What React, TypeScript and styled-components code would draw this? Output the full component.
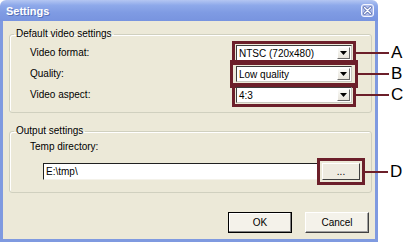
import React from "react";
import styled, { createGlobalStyle } from "styled-components";

const GlobalStyle = createGlobalStyle`
  html, body {
    margin: 0;
    padding: 0;
    background: #ffffff;
  }
  body {
    font-family: "Liberation Sans", Arial, sans-serif;
    font-size: 10px;
    color: #000;
  }
`;

const MAROON = "#6c1f2a";

function App() {
  return (
    <>
      <GlobalStyle />
      <Page>
        <Dialog>
          <TitleBar>
            <Title>Settings</Title>
            <CloseButton>
              <svg width="13" height="13" viewBox="0 0 13 13">
                <rect x="0.5" y="0.5" width="12" height="12" rx="2.5" fill="#aebbe8" stroke="#f4f6ff" />
                <path d="M3.5 3.5 L9.5 9.5 M9.5 3.5 L3.5 9.5" stroke="#5b6fb0" strokeWidth="3" strokeLinecap="round" />
                <path d="M3.5 3.5 L9.5 9.5 M9.5 3.5 L3.5 9.5" stroke="#ffffff" strokeWidth="1.4" strokeLinecap="round" />
              </svg>
            </CloseButton>
          </TitleBar>

          <Body>
            <GroupBox>
              <Legend>Default video settings</Legend>
              <VideoRows>
                <FieldRow>
                  <FieldLabel>Video format:</FieldLabel>
                  <Callout $offset={1}>
                    <Combo value="NTSC (720x480)" />
                    <Tag $offset={1} $reach={33}>A</Tag>
                  </Callout>
                </FieldRow>
                <FieldRow>
                  <FieldLabel>Quality:</FieldLabel>
                  <Callout $offset={3}>
                    <Combo value="Low quality" />
                    <Tag $offset={3} $reach={31}>B</Tag>
                  </Callout>
                </FieldRow>
                <FieldRow>
                  <FieldLabel>Video aspect:</FieldLabel>
                  <Callout $offset={1}>
                    <Combo value="4:3" />
                    <Tag $offset={1} $reach={33}>C</Tag>
                  </Callout>
                </FieldRow>
              </VideoRows>
            </GroupBox>

            <OutputGroup>
              <Legend>Output settings</Legend>
              <OutputContent>
                <FieldLabel>Temp directory:</FieldLabel>
                <PathRow>
                  <TextBox>E:\tmp\</TextBox>
                  <Callout $offset={2}>
                    <BrowseButton>...</BrowseButton>
                    <Tag $offset={2} $reach={23}>D</Tag>
                  </Callout>
                </PathRow>
              </OutputContent>
            </OutputGroup>

            <ButtonRow>
              <PushButton $default>OK</PushButton>
              <PushButton>Cancel</PushButton>
            </ButtonRow>
          </Body>
        </Dialog>
      </Page>
    </>
  );
}

function Combo({ value }: { value: string }) {
  return (
    <ComboBox>
      <ComboText>{value}</ComboText>
      <ComboArrow>
        <svg width="7" height="4" viewBox="0 0 7 4">
          <path d="M0 0 H7 L3.5 4 Z" fill="#000" />
        </svg>
      </ComboArrow>
    </ComboBox>
  );
}

const Page = styled.div`
  display: flex;
  width: 407px;
  height: 244px;
  overflow: hidden;
  background: #fff;
`;

const Dialog = styled.div`
  display: flex;
  flex-direction: column;
  width: 378px;
  height: 242px;
`;

const TitleBar = styled.div`
  display: flex;
  align-items: center;
  justify-content: space-between;
  height: 21px;
  flex: none;
  padding: 0 4px 0 6px;
  border-radius: 6px 6px 0 0;
  background: linear-gradient(#b4c6f2 0%, #8ea9ea 25%, #7f9be3 60%, #7894df 100%);
`;

const Title = styled.span`
  font-family: "Liberation Sans", Arial, sans-serif;
  font-weight: bold;
  font-size: 11px;
  color: #ffffff;
  text-shadow: 1px 1px 0 #5a72b8;
`;

const CloseButton = styled.span`
  display: flex;
  width: 13px;
  height: 13px;
`;

const Body = styled.div`
  flex: 1;
  display: flex;
  flex-direction: column;
  padding: 7px 3px 0 6px;
  background: #ece9d8;
  border: 3px solid #7f9ae0;
  border-top: 0;
`;

const GroupBox = styled.fieldset`
  margin: 0;
  padding: 0 0 9px 0;
  min-width: 0;
  border: 1px solid #d0d0bf;
  border-radius: 3px;
  box-shadow: 1px 1px 0 #fff inset;
`;

const OutputGroup = styled(GroupBox)`
  margin-top: 12px;
  padding-bottom: 12px;
`;

const Legend = styled.legend`
  margin-left: 4px;
  padding: 0 2px;
  line-height: 12px;
  font-size: 10px;
`;

const VideoRows = styled.div`
  display: flex;
  flex-direction: column;
  gap: 5px;
  padding: 5px 19px 0 20px;
`;

const FieldRow = styled.div`
  display: flex;
  align-items: center;
  justify-content: space-between;
  height: 16px;
`;

const FieldLabel = styled.span`
  font-size: 10px;
  line-height: 12px;
`;

const Callout = styled.div<{ $offset: number }>`
  position: relative;
  display: flex;
  outline: 3px solid ${MAROON};
  outline-offset: ${(p) => p.$offset}px;
`;

const Tag = styled.span<{ $offset: number; $reach: number }>`
  position: absolute;
  top: 50%;
  left: calc(100% + ${(p) => p.$offset + 3}px);
  display: flex;
  align-items: center;
  gap: 2px;
  transform: translateY(-50%);
  font-family: "Liberation Sans", Arial, sans-serif;
  font-size: 17px;
  line-height: 18px;
  color: #000;

  &::before {
    content: "";
    width: ${(p) => p.$reach}px;
    height: 2px;
    background: ${MAROON};
  }
`;

const ComboBox = styled.div`
  display: flex;
  align-items: center;
  width: 116px;
  height: 16px;
  box-sizing: border-box;
  background: #fff;
  border: 1px solid;
  border-color: #3c3c3c #c8c8c0 #c8c8c0 #3c3c3c;
`;

const ComboText = styled.span`
  flex: 1;
  padding-left: 2px;
  font-size: 10px;
  white-space: nowrap;
`;

const ComboArrow = styled.span`
  display: flex;
  align-items: center;
  justify-content: center;
  width: 13px;
  height: 12px;
  margin-right: 1px;
  box-sizing: border-box;
  background: linear-gradient(#fbfbf8, #e6e3da);
  border: 1px solid;
  border-color: #fff #6a6a6a #6a6a6a #fff;
`;

const OutputContent = styled.div`
  display: flex;
  flex-direction: column;
  padding: 4px 0 0 20px;
`;

const PathRow = styled.div`
  display: flex;
  align-items: center;
  gap: 4px;
  margin-top: 10px;
  padding-left: 13px;
  padding-right: 11px;
`;

const TextBox = styled.div`
  flex: 1;
  height: 17px;
  box-sizing: border-box;
  padding-left: 2px;
  line-height: 15px;
  font-size: 10px;
  background: #fff;
  border: 1px solid;
  border-color: #202020 #f4f2ea #f4f2ea #202020;
`;

const BrowseButton = styled.div`
  display: flex;
  align-items: center;
  justify-content: center;
  width: 38px;
  height: 17px;
  box-sizing: border-box;
  font-size: 10px;
  background: #eeebe0;
  border: 1px solid;
  border-color: #fff #404040 #404040 #fff;
`;

const ButtonRow = styled.div`
  display: flex;
  justify-content: flex-end;
  gap: 13px;
  margin-top: 19px;
  padding-right: 3px;
`;

const PushButton = styled.div<{ $default?: boolean }>`
  display: flex;
  align-items: center;
  justify-content: center;
  width: 64px;
  height: 21px;
  box-sizing: border-box;
  font-size: 10px;
  background: #f4f2ea;
  border: 1px solid;
  border-color: ${(p) => (p.$default ? "#000" : "#fff #404040 #404040 #fff")};
  box-shadow: ${(p) => (p.$default ? "inset -1px -1px 0 #808080, inset 1px 1px 0 #fff" : "inset -1px -1px 0 #a0a0a0")};
`;

export default App;
